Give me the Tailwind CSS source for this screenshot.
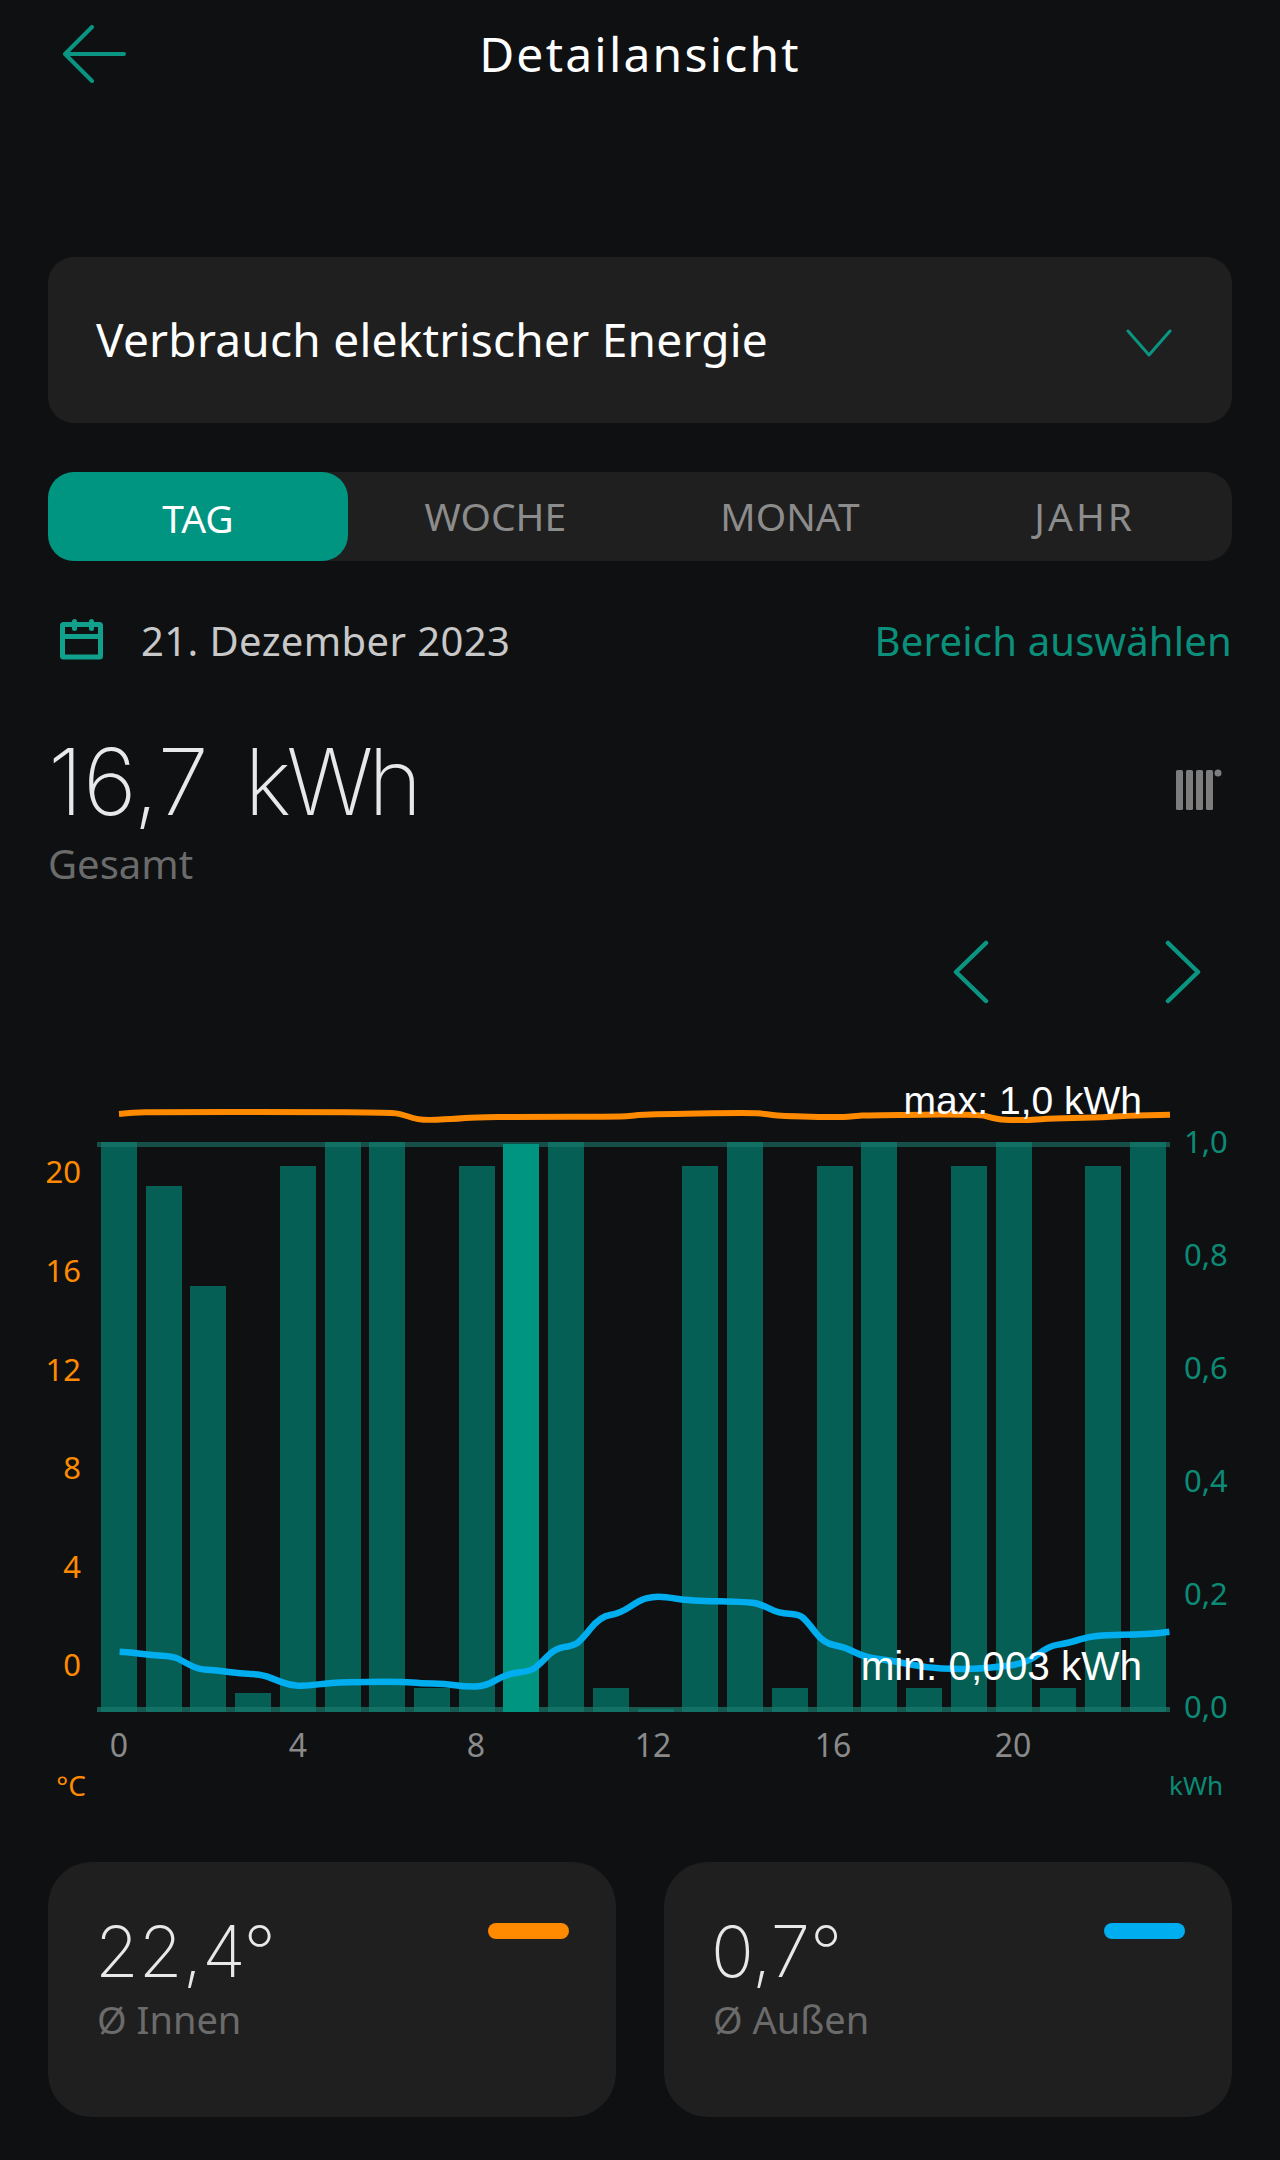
<!DOCTYPE html>
<html lang="de">
<head>
  <meta charset="UTF-8" />
  <title>Detailansicht</title>
  <script src="https://cdn.jsdelivr.net/npm/@tailwindcss/browser@4"></script>
</head>
<body class="bg-[#0e1012]">
  <div class="w-[1280px] h-[2160px] px-[48px] font-['Noto_Sans',sans-serif] text-white">

    <!-- header -->
    <div class="grid grid-cols-[96px_1fr_96px] h-[108px] items-center">
      <svg class="ml-[14px]" width="64" height="58" viewBox="0 0 64 58" fill="none" stroke="#0a9582" stroke-width="4" stroke-linecap="round" stroke-linejoin="round">
        <path d="M30 2 L3 29 L30 56 M3 29 H62" />
      </svg>
      <h1 class="text-center text-[48px] tracking-[2.2px] leading-none text-white">Detailansicht</h1>
    </div>

    <!-- selector -->
    <div class="mt-[149px] h-[166px] bg-[#1f1f1f] rounded-[26px] flex items-center justify-between pl-[48px] pr-[60px]">
      <span class="-mt-[2px] text-[46px] tracking-[0.25px] text-white">Verbrauch elektrischer Energie</span>
      <svg class="mt-[6px]" width="46" height="28" viewBox="0 0 46 28" fill="none" stroke="#0a9582" stroke-width="3" stroke-linecap="round" stroke-linejoin="round">
        <path d="M2 2 L23 26 L44 2" />
      </svg>
    </div>

    <!-- range tabs -->
    <div class="mt-[49px] h-[89px] bg-[#1f1f1f] rounded-[26px] flex items-center text-[39px] text-[#8c8c8c]">
      <div class="w-[300px] h-full bg-[#009580] rounded-[26px] flex items-center justify-center text-white pt-[4px]">TAG</div>
      <div class="flex-1 text-center">WOCHE</div>
      <div class="flex-1 text-center">MONAT</div>
      <div class="flex-1 text-center tracking-[3px]">JAHR</div>
    </div>

    <!-- date row -->
    <div class="mt-[52px] h-[56px] flex items-center text-[40px]">
      <svg class="ml-[12px] -mt-[3px]" width="44" height="41" viewBox="0 0 44 41" fill="none" stroke="#10a08b" stroke-width="5">
        <rect x="2.5" y="5.5" width="38" height="32.5" rx="1" />
        <path d="M2 17.5 H41" />
        <rect x="12" y="0" width="5" height="12" rx="2.5" fill="#10a08b" stroke="none" />
        <rect x="29" y="0" width="5" height="12" rx="2.5" fill="#10a08b" stroke="none" />
      </svg>
      <span class="ml-[37px] tracking-[0.4px] text-[#c8c8c8]">21. Dezember 2023</span>
      <span class="ml-auto tracking-[0.2px] text-[#0b8f7b]">Bereich auswählen</span>
    </div>

    <!-- total -->
    <div class="mt-[63px] flex items-start justify-between">
      <div>
        <div class="font-['Inter',sans-serif] font-extralight text-[92px] leading-[100px] text-[#e8e8e8] [word-spacing:10px]">16,7 <span class="tracking-[-5px]">kWh</span></div>
        <div class="mt-[7px] text-[40px] leading-[50px] text-[#6b6b6b]">Gesamt</div>
      </div>
      <svg class="mt-[34px] mr-[8px]" width="48" height="44" viewBox="0 0 48 44" fill="#7d7d7d">
        <rect x="0" y="4" width="7" height="40" rx="1.5" />
        <rect x="10" y="4" width="7" height="40" rx="1.5" />
        <rect x="20" y="4" width="7" height="40" rx="1.5" />
        <rect x="30" y="4" width="7" height="40" rx="1.5" />
        <circle cx="42" cy="7" r="3.5" />
      </svg>
    </div>

    <!-- pager -->
    <div class="mt-[51px] flex justify-end gap-[176px] pr-[31px]">
      <svg width="36" height="64" viewBox="0 0 36 64" fill="none" stroke="#0a9582" stroke-width="4.5" stroke-linecap="round" stroke-linejoin="round">
        <path d="M33 3 L3 32 L33 61" />
      </svg>
      <svg width="36" height="64" viewBox="0 0 36 64" fill="none" stroke="#0a9582" stroke-width="4.5" stroke-linecap="round" stroke-linejoin="round">
        <path d="M3 3 L33 32 L3 61" />
      </svg>
    </div>

    <!-- chart: coordinates in the viewBox are page pixels -->
    <svg class="block -ml-[48px] mt-[76px]" width="1280" height="740" viewBox="0 1080 1280 740">
      <g fill="#065f55">
        <rect x="101" y="1142" width="36" height="570" />
        <rect x="146" y="1186" width="36" height="526" />
        <rect x="190" y="1286" width="36" height="426" />
        <rect x="235" y="1693" width="36" height="19" />
        <rect x="280" y="1166" width="36" height="546" />
        <rect x="325" y="1142" width="36" height="570" />
        <rect x="369" y="1142" width="36" height="570" />
        <rect x="414" y="1688" width="36" height="24" />
        <rect x="459" y="1166" width="36" height="546" />
        <rect x="548" y="1142" width="36" height="570" />
        <rect x="593" y="1688" width="36" height="24" />
        <rect x="638" y="1709" width="36" height="3" />
        <rect x="682" y="1166" width="36" height="546" />
        <rect x="727" y="1142" width="36" height="570" />
        <rect x="772" y="1688" width="36" height="24" />
        <rect x="817" y="1166" width="36" height="546" />
        <rect x="861" y="1142" width="36" height="570" />
        <rect x="906" y="1688" width="36" height="24" />
        <rect x="951" y="1166" width="36" height="546" />
        <rect x="996" y="1142" width="36" height="570" />
        <rect x="1040" y="1688" width="36" height="24" />
        <rect x="1085" y="1166" width="36" height="546" />
        <rect x="1130" y="1142" width="36" height="570" />
      </g>
      <rect x="97" y="1142" width="1073" height="5" fill="#1a7a6c" fill-opacity="0.6" />
      <rect x="97" y="1707" width="1073" height="5" fill="#1a7a6c" fill-opacity="0.7" />
      <rect x="503" y="1144" width="36" height="568" fill="#009580" />

      <path class="curve" fill="none" stroke="#ff8a00" stroke-width="6" stroke-linejoin="round" data-points="119,1114 135,1112.6 155,1112 302,1112 391.8,1112.7 400,1114 408,1116.5 418,1119.5 428.6,1120 445,1119.5 457,1118.7 473.5,1117.3 522.4,1116.7 620.4,1116.7 632,1115.8 645,1114.3 751,1112.7 765,1114 780,1116 840.8,1117.3 855,1116.2 869.4,1115 979.6,1114.3 992,1118 1004,1120 1028.6,1120 1053,1118.3 1093.9,1117.7 1126.5,1115.7 1170,1114.7" />
      <path class="curve" fill="none" stroke="#00aeef" stroke-width="6.5" stroke-linejoin="round" data-points="119.6,1651.7 134.7,1652.7 151,1655.3 173.5,1656.3 183.7,1661.7 198,1669.3 216.3,1670.3 240.8,1673.7 261.2,1674.3 273.5,1679 289.8,1685.3 306,1686 330.6,1682.7 367.3,1681.7 404,1681.7 420.4,1683.3 444.9,1683.7 465.3,1686.7 485.7,1686.3 506,1674 530.6,1671 538.8,1665 555,1648.3 573.5,1645.7 581.6,1640 600,1616.7 620.4,1613.3 640,1600 652.2,1596.7 664.5,1596.7 689,1600.7 750.2,1602 762.4,1605 778.8,1613.3 799.2,1614.3 807.3,1621.7 823.7,1643.3 844,1646.7 864.5,1657.3 893,1660.7 925.7,1667.7 958.4,1669.3 987,1668.3 1027.8,1663.3 1048,1646 1068.6,1643.3 1093,1635 1150,1634.3 1169.4,1631.7" />

      <g class="font-['Liberation_Sans',sans-serif]" fill="#ffffff" text-anchor="end">
        <text x="1142" y="1114" font-size="39">max: 1,0 kWh</text>
        <text x="1142" y="1680" font-size="40.5">min: 0,003 kWh</text>
      </g>

      <g font-size="31" fill="#ff8a00" text-anchor="end">
        <text x="81" y="1183">20</text>
        <text x="81" y="1282">16</text>
        <text x="81" y="1381">12</text>
        <text x="81" y="1479">8</text>
        <text x="81" y="1578">4</text>
        <text x="81" y="1676">0</text>
        <text x="86" y="1796" font-size="28">°C</text>
      </g>
      <g font-size="31" fill="#0b8a75">
        <text x="1184" y="1153">1,0</text>
        <text x="1184" y="1266">0,8</text>
        <text x="1184" y="1379">0,6</text>
        <text x="1184" y="1492">0,4</text>
        <text x="1184" y="1605">0,2</text>
        <text x="1184" y="1718">0,0</text>
        <text x="1169" y="1795" font-size="26">kWh</text>
      </g>
      <g font-size="32" fill="#8a8a8a" text-anchor="middle">
        <text x="119" y="1757">0</text>
        <text x="298" y="1757">4</text>
        <text x="476" y="1757">8</text>
        <text x="653" y="1757">12</text>
        <text x="833" y="1757">16</text>
        <text x="1013" y="1757">20</text>
      </g>
    </svg>

    <!-- averages -->
    <div class="mt-[42px] grid grid-cols-2 gap-[48px]">
      <div class="h-[255px] bg-[#1f1f1f] rounded-[44px] pl-[49px] pr-[47px] pt-[46px] flex justify-between items-start">
        <div>
          <div class="-ml-[2px] font-['Inter',sans-serif] font-extralight text-[71px] leading-[86px] text-[#e8e8e8]">22,4°</div>
          <div class="text-[38px] leading-[50px] text-[#6b6b6b]">Ø Innen</div>
        </div>
        <div class="mt-[15px] w-[81px] h-[16px] rounded-full bg-[#ff8a00]"></div>
      </div>
      <div class="h-[255px] bg-[#1f1f1f] rounded-[44px] pl-[49px] pr-[47px] pt-[46px] flex justify-between items-start">
        <div>
          <div class="-ml-[2px] font-['Inter',sans-serif] font-extralight text-[71px] leading-[86px] text-[#e8e8e8]">0,7°</div>
          <div class="text-[38px] leading-[50px] text-[#6b6b6b]">Ø Außen</div>
        </div>
        <div class="mt-[15px] w-[81px] h-[16px] rounded-full bg-[#00aeef]"></div>
      </div>
    </div>
  </div>

  <script>
    // smooth the measured points with midpoint quadratics
    document.querySelectorAll('.curve').forEach((el) => {
      const pts = el.dataset.points.split(' ').map((p) => p.split(',').map(Number));
      let d = `M${pts[0][0]} ${pts[0][1]}`;
      for (let i = 1; i < pts.length - 1; i++) {
        const mx = (pts[i][0] + pts[i + 1][0]) / 2;
        const my = (pts[i][1] + pts[i + 1][1]) / 2;
        d += ` Q${pts[i][0]} ${pts[i][1]} ${mx} ${my}`;
      }
      const last = pts[pts.length - 1];
      d += ` L${last[0]} ${last[1]}`;
      el.setAttribute('d', d);
    });
  </script>
</body>
</html>
